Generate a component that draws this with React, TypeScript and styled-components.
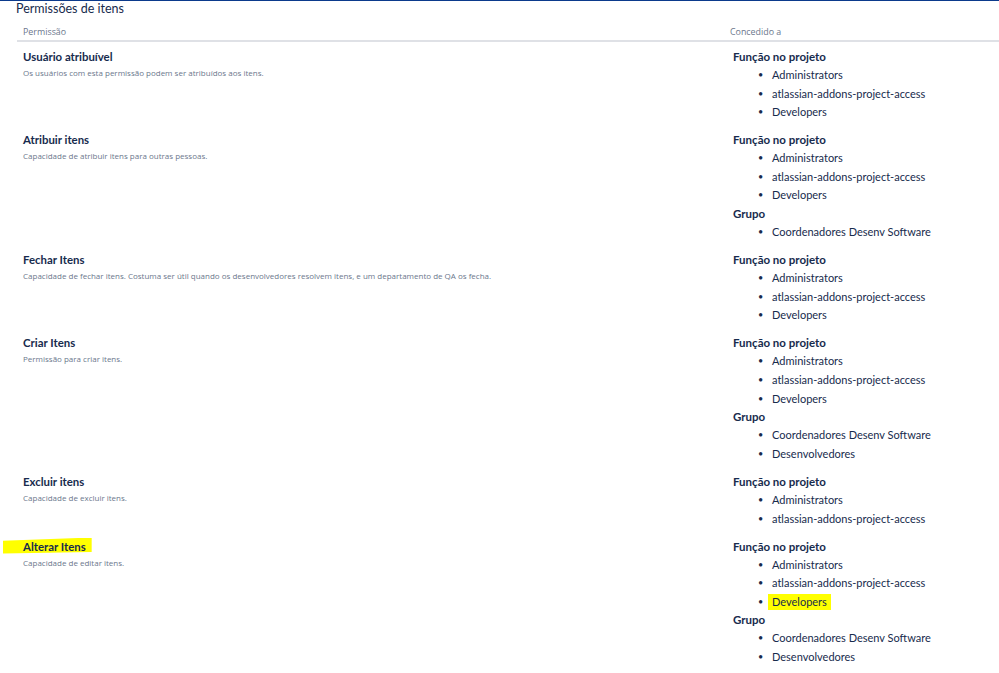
import React from "react";
import styled, { createGlobalStyle } from "styled-components";

const Global = createGlobalStyle`
  html, body { margin: 0; padding: 0; background: #fff; }
  body { font-family: Lato, "Open Sans", sans-serif; color: #172b4d; }
  * { box-sizing: border-box; }
`;

type Group = { title: string; items: { name: string; mark?: boolean }[] };
type Perm = { title: string; desc: string; mark?: boolean; groups: Group[] };

const roles = (n: number, markDev = false): Group => ({
  title: "Função no projeto",
  items: [
    { name: "Administrators" },
    { name: "atlassian-addons-project-access" },
    ...(n > 2 ? [{ name: "Developers", mark: markDev }] : []),
  ],
});

const perms: Perm[] = [
  { title: "Usuário atribuível", desc: "Os usuários com esta permissão podem ser atribuídos aos itens.", groups: [roles(3)] },
  {
    title: "Atribuir itens",
    desc: "Capacidade de atribuir itens para outras pessoas.",
    groups: [roles(3), { title: "Grupo", items: [{ name: "Coordenadores Desenv Software" }] }],
  },
  {
    title: "Fechar Itens",
    desc: "Capacidade de fechar itens. Costuma ser útil quando os desenvolvedores resolvem itens, e um departamento de QA os fecha.",
    groups: [roles(3)],
  },
  {
    title: "Criar Itens",
    desc: "Permissão para criar itens.",
    groups: [roles(3), { title: "Grupo", items: [{ name: "Coordenadores Desenv Software" }, { name: "Desenvolvedores" }] }],
  },
  { title: "Excluir itens", desc: "Capacidade de excluir itens.", groups: [roles(2)] },
  {
    title: "Alterar Itens",
    desc: "Capacidade de editar itens.",
    mark: true,
    groups: [roles(3, true), { title: "Grupo", items: [{ name: "Coordenadores Desenv Software" }, { name: "Desenvolvedores" }] }],
  },
];

const Page = styled.div`
  border-top: 1px solid #0b3a8c;
  width: 999px;
  height: 673px;
  overflow: hidden;
`;

const Layer = styled.div`
  position: relative;
  z-index: 0;
`;

const Title = styled.h2`
  margin: 0 0 0 16px;
  font-size: 12.5px;
  line-height: 16px;
  font-weight: 400;
  color: #172b4d;
`;

const Table = styled.div`
  margin: 4px 0 0 17px;
`;

const Row = styled.div<{ $head?: boolean }>`
  display: grid;
  grid-template-columns: 707px 1fr;
  ${(p) => (p.$head ? "border-bottom: 2px solid #dfe1e6; padding: 4px 0 1px;" : "padding: 6px 0 3.5px;")}
`;

const HeadCell = styled.div`
  padding-left: 6px;
  font-family: "Open Sans", sans-serif;
  font-size: 8.9px;
  line-height: 14px;
  color: #6b778c;
`;

const PermCell = styled.div`
  padding-left: 6px;
`;

const PermTitle = styled.div`
  font-size: 11.4px;
  line-height: 18px;
  font-weight: 700;
  color: #172b4d;
`;

const Marked = styled.span`
  position: relative;
  &::before {
    content: "";
    position: absolute;
    left: -20px;
    right: -6px;
    top: -2px;
    bottom: -1px;
    background: #ffff00;
    z-index: -1;
    clip-path: polygon(0 20%, 100% 0, 100% 90%, 0 100%);
  }
`;

const PermDesc = styled.div`
  font-family: "Open Sans", sans-serif;
  font-size: 8px;
  line-height: 12px;
  margin-top: 1px;
  color: #6b778c;
`;

const GrantCell = styled.div`
  padding-left: 9px;
`;

const GroupTitle = styled.div`
  font-size: 11.5px;
  line-height: 18px;
  font-weight: 700;
  color: #172b4d;
`;

const List = styled.ul`
  margin: 0;
  padding: 0 0 0 25px;
  list-style: none;
`;

const Item = styled.li`
  display: flex;
  font-size: 11px;
  line-height: 18.6px;
  color: #172b4d;
  &::before {
    content: "•";
    width: 14px;
    font-size: 9px;
    flex: none;
  }
`;

const Hi = styled.span`
  background: #ffff00;
  padding: 1px 4px 2px;
  margin-left: -4px;
`;

export default function App() {
  return (
    <>
      <Global />
      <Page>
        <Layer>
          <Title>Permissões de itens</Title>
          <Table>
            <Row $head>
              <HeadCell>Permissão</HeadCell>
              <HeadCell>Concedido a</HeadCell>
            </Row>
            {perms.map((p) => (
              <Row key={p.title}>
                <PermCell>
                  <PermTitle>{p.mark ? <Marked>{p.title}</Marked> : p.title}</PermTitle>
                  <PermDesc>{p.desc}</PermDesc>
                </PermCell>
                <GrantCell>
                  {p.groups.map((g) => (
                    <div key={g.title}>
                      <GroupTitle>{g.title}</GroupTitle>
                      <List>
                        {g.items.map((i) => (
                          <Item key={i.name}>
                            <span>{i.mark ? <Hi>{i.name}</Hi> : i.name}</span>
                          </Item>
                        ))}
                      </List>
                    </div>
                  ))}
                </GrantCell>
              </Row>
            ))}
          </Table>
        </Layer>
      </Page>
    </>
  );
}
